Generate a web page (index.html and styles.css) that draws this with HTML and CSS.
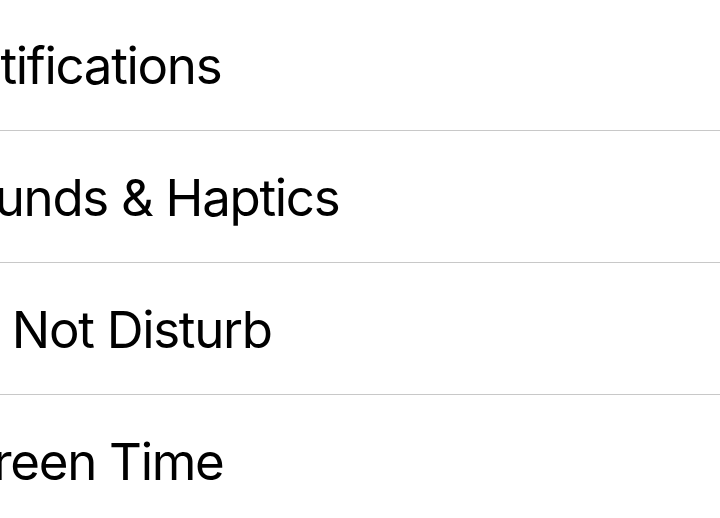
FILE: index.html
```html
<!DOCTYPE html>
<html>
<head>
<meta charset="utf-8">
<link rel="stylesheet" href="styles.css">
</head>
<body>
<ul class="list">
  <li class="row"><span class="label">Notifications</span></li>
  <li class="row"><span class="label">Sounds &amp; Haptics</span></li>
  <li class="row"><span class="label">Do Not Disturb</span></li>
  <li class="row"><span class="label">Screen Time</span></li>
</ul>
</body>
</html>
```
FILE: styles.css
```css
html, body {
  margin: 0;
  padding: 0;
  background: #ffffff;
  overflow: hidden;
}
.list {
  list-style: none;
  margin: -1px 0 0 0;
  padding: 0;
}
.row {
  height: 131px;
  border-bottom: 1px solid #c8c8c8;
  display: flex;
  align-items: flex-start;
  margin-left: -66px;
  font-family: Inter, "Noto Sans", sans-serif;
  font-size: 51px;
  letter-spacing: -1.3px;
  color: #000;
}
.label {
  display: block;
  line-height: 62px;
  padding-top: 36px;
  white-space: nowrap;
}
```
